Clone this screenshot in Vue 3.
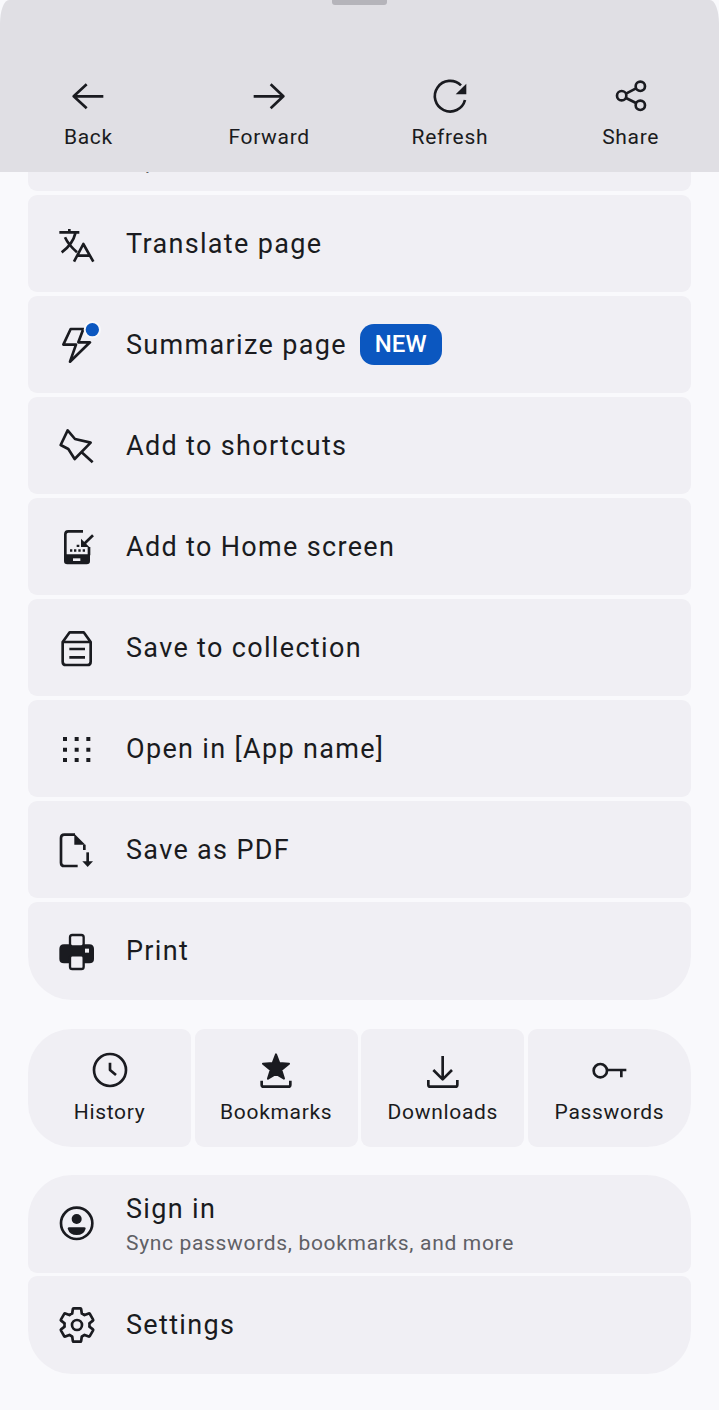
<template>
  <div class="page">
    <header class="toolbar">
      <div class="handle"></div>
      <nav class="nav">
        <div class="nav-item">
          <svg class="icon" viewBox="0 0 120 120"><path d="M106 61H17M56 25L17 61L56 97" /></svg>
          <span>Back</span>
        </div>
        <div class="nav-item">
          <svg class="icon" viewBox="0 0 120 120"><path d="M14 61H103M65 25L103 61L65 97" /></svg>
          <span>Forward</span>
        </div>
        <div class="nav-item">
          <svg class="icon" viewBox="0 0 120 120">
            <path d="M93 28A46 46 0 1 0 105 72" />
            <path class="fill" d="M109 23V55H77Z" />
          </svg>
          <span>Refresh</span>
        </div>
        <div class="nav-item">
          <svg class="icon" viewBox="0 0 120 120">
            <circle cx="88" cy="31" r="14" />
            <circle cx="32" cy="59" r="14" />
            <circle cx="88" cy="88" r="14" />
            <path d="M45 53L75 37M45 66L75 81" />
          </svg>
          <span>Share</span>
        </div>
      </nav>
    </header>

    <main class="content">
      <section class="list">
        <div class="row">
          <span class="icon-slot"></span>
          <div class="texts">
            <div class="title">Desktop</div>
            <div class="sub">Tips</div>
          </div>
        </div>
        <div class="row">
          <svg class="icon" viewBox="0 0 120 120">
            <path d="M7 25H67M37 15V25M14 85C35 70 50 50 56 25M24 40C32 58 45 72 60 85" />
            <path d="M51 113L79 60L109 113M60 95H100" />
          </svg>
          <div class="title">Translate page</div>
        </div>
        <div class="row">
          <svg class="icon" viewBox="0 0 120 120">
            <path d="M41 12L19 59H57L39 110L99 52H64L79 12Z" />
            <circle class="dot" cx="106" cy="14" r="23" />
          </svg>
          <div class="title">Summarize page</div>
          <span class="badge">NEW</span>
        </div>
        <div class="row">
          <svg class="icon" viewBox="0 0 120 120">
            <path d="M32 13L11 57L34 69L53 99L101 50L54 39ZM74 79L107 109" />
          </svg>
          <div class="title">Add to shortcuts</div>
        </div>
        <div class="row">
          <svg class="icon" viewBox="0 0 120 120">
            <path d="M78 13H34Q25 13 25 22V85M96 60V85" />
            <path class="fill" d="M21 82H99V102Q99 112 89 112H31Q21 112 21 102Z" />
            <rect class="hole" x="48" y="94" width="22" height="8" />
            <path class="fill" d="M59 53h8v7h-8zM39 67h7v7h-7zM51 67h7v7h-7zM64 67h7v7h-7zM77 67h7v7h-7z" />
            <path d="M108 25L78 54" />
            <path class="fill" d="M72 35V60H97Z" />
          </svg>
          <div class="title">Add to Home screen</div>
        </div>
        <div class="row">
          <svg class="icon" viewBox="0 0 120 120">
            <path d="M17 42L38 13H80L101 42V101Q101 111 91 111H27Q17 111 17 101ZM17 42H101M37 63H84M37 88H84" />
          </svg>
          <div class="title">Save to collection</div>
        </div>
        <div class="row">
          <svg class="icon" viewBox="0 0 120 120">
            <path class="fill" d="M18 24h12v12h-12zM53 24h12v12h-12zM88 24h12v12h-12zM18 56h12v12h-12zM53 56h12v12h-12zM88 56h12v12h-12zM18 87h12v12h-12zM53 87h12v12h-12zM88 87h12v12h-12z" />
          </svg>
          <div class="title">Open in [App name]</div>
        </div>
        <div class="row">
          <svg class="icon" viewBox="0 0 120 120">
            <path d="M54 14H22Q12 14 12 24V98Q12 108 22 108H62M82 44V60" />
            <path class="fill" d="M52 11L85 44H52Z" />
            <path d="M92 67V96" />
            <path class="fill" d="M76 94H108L92 111Z" />
          </svg>
          <div class="title">Save as PDF</div>
        </div>
        <div class="row last">
          <svg class="icon" viewBox="0 0 120 120">
            <path class="fill" d="M21 40H97Q111 40 111 54V84Q111 97 97 97H21Q7 97 7 84V54Q7 40 21 40Z" />
            <rect class="paper" x="39" y="12" width="41" height="34" rx="7" />
            <rect class="paper" x="39" y="73" width="41" height="41" rx="7" />
            <rect class="hole" x="84" y="53" width="12" height="12" />
          </svg>
          <div class="title">Print</div>
        </div>
      </section>

      <section class="tiles">
        <div class="tile">
          <svg class="icon" viewBox="0 0 120 120">
            <circle cx="60" cy="60" r="48" />
            <path d="M60 38V60L78 75" />
          </svg>
          <span>History</span>
        </div>
        <div class="tile">
          <svg class="icon" viewBox="0 0 120 120">
            <path class="star" d="M60 13L70 39L99 41L76 60L84 86L60 72L36 86L44 60L21 41L50 39Z" />
            <path d="M17 92V104Q17 110 23 110H97Q103 110 103 104V92" />
          </svg>
          <span>Bookmarks</span>
        </div>
        <div class="tile">
          <svg class="icon" viewBox="0 0 120 120">
            <path d="M59 18V88M31 60L59 88L87 60" />
            <path d="M16 90V104Q16 110 22 110H97Q103 110 103 104V90" />
          </svg>
          <span>Downloads</span>
        </div>
        <div class="tile">
          <svg class="icon" viewBox="0 0 120 120">
            <circle cx="34" cy="62" r="20" />
            <path d="M54 60H112M97 60V82" />
          </svg>
          <span>Passwords</span>
        </div>
      </section>

      <section class="list account">
        <div class="row">
          <svg class="icon" viewBox="0 0 120 120">
            <circle cx="59" cy="58" r="47" />
            <circle class="fill" cx="59" cy="45" r="15" />
            <path class="fill" d="M32 74Q32 70 37 70H81Q86 70 86 74Q80 93 59 93Q38 93 32 74Z" />
          </svg>
          <div class="texts">
            <div class="title">Sign in</div>
            <div class="sub">Sync passwords, bookmarks, and more</div>
          </div>
        </div>
        <div class="row last">
          <svg class="icon gear" viewBox="0 0 24 24">
            <path d="M19.43 12.98c.04-.32.07-.64.07-.98 0-.34-.03-.66-.07-.98l2.11-1.65c.19-.15.24-.42.12-.64l-2-3.46c-.09-.16-.26-.25-.44-.25-.06 0-.12.01-.17.03l-2.49 1c-.52-.4-1.08-.73-1.69-.98l-.38-2.65C14.46 2.18 14.25 2 14 2h-4c-.25 0-.46.18-.49.42l-.38 2.65c-.61.25-1.17.59-1.69.98l-2.49-1c-.06-.02-.12-.03-.18-.03-.17 0-.34.09-.43.25l-2 3.46c-.13.22-.07.49.12.64l2.11 1.65c-.04.32-.07.65-.07.98 0 .33.03.66.07.98l-2.11 1.65c-.19.15-.24.42-.12.64l2 3.46c.09.16.26.25.44.25.06 0 .12-.01.17-.03l2.49-1c.52.4 1.08.73 1.69.98l.38 2.65c.03.24.24.42.49.42h4c.25 0 .46-.18.49-.42l.38-2.65c.61-.25 1.17-.59 1.69-.98l2.49 1c.06.02.12.03.18.03.17 0 .34-.09.43-.25l2-3.46c.12-.22.07-.49-.12-.64l-2.11-1.65z" />
            <circle cx="12" cy="12" r="3" />
          </svg>
          <div class="title">Settings</div>
        </div>
      </section>
    </main>
  </div>
</template>

<script setup>
</script>

<style>
html,
body {
  margin: 0;
  background: #f9f9fc;
}
</style>

<style scoped>
.page {
  position: relative;
  width: 719px;
  height: 1410px;
  overflow: hidden;
  background: #f9f9fc;
  color: #1a1b20;
  font-family: Roboto, "Noto Sans", sans-serif;
}

/* bottom sheet header sits over the scrolled list */
.toolbar {
  position: absolute;
  top: 0;
  left: 0;
  right: 0;
  z-index: 2;
  height: 172px;
  background: #e0dfe4;
  border-top-left-radius: 9px 24px;
  border-top-right-radius: 9px 24px;
}

.handle {
  width: 55px;
  height: 5px;
  margin: 0 auto;
  background: #b5b4ba;
  border-radius: 0 0 3px 3px;
}

.nav {
  display: grid;
  grid-template-columns: repeat(4, 1fr);
  margin: 71px -2px 0;
}

.nav-item,
.tile {
  display: flex;
  flex-direction: column;
  align-items: center;
  font-size: 21px;
  letter-spacing: 0.68px;
  line-height: 28px;
}

.nav-item .icon {
  margin-bottom: 7px;
}

.icon {
  flex: none;
  width: 40px;
  height: 40px;
  overflow: visible;
  fill: none;
  stroke: #1a1b20;
  stroke-width: 8;
  stroke-linejoin: round;
}

.icon .fill {
  fill: #1a1b20;
  stroke: none;
}

.icon .star {
  fill: #1a1b20;
  stroke-width: 6;
}

.icon .hole {
  fill: #f0eff4;
  stroke: none;
}

.icon .paper {
  fill: #f0eff4;
  stroke-width: 7;
}

.icon .dot {
  fill: #0b57c0;
  stroke: #f8f8fb;
  stroke-width: 6;
}

.gear {
  stroke-width: 1.6;
}

.content {
  display: flex;
  flex-direction: column;
  padding: 94px 28px 0;
}

.list {
  display: flex;
  flex-direction: column;
  gap: 4px;
}

.row {
  display: flex;
  align-items: center;
  height: 97px;
  padding-left: 29px;
  background: #f0eff4;
  border-radius: 9px;
}

.row.last {
  height: 98px;
  border-radius: 9px 9px 44px 44px;
}

.icon-slot {
  flex: none;
  width: 40px;
}

.title {
  margin-left: 29px;
  font-size: 27px;
  letter-spacing: 1.33px;
  line-height: 34px;
}

.texts {
  padding-top: 4px;
}

.sub {
  margin-left: 29px;
  color: #5f6066;
  font-size: 21px;
  letter-spacing: 0.67px;
  line-height: 34px;
}

.badge {
  margin-left: 13px;
  padding: 0 15px;
  height: 41px;
  line-height: 41px;
  color: #fff;
  background: #0b57c0;
  border-radius: 14px;
  font-size: 24px;
  font-weight: 500;
}

.tiles {
  display: grid;
  grid-template-columns: repeat(4, 1fr);
  gap: 3.5px;
  margin-top: 29px;
}

.tile {
  height: 118px;
  padding-top: 21px;
  box-sizing: border-box;
  background: #f0eff4;
  border-radius: 9px;
}

.tile span {
  margin-top: 8px;
}

.tile:first-child {
  border-radius: 44px 9px 9px 44px;
}

.tile:last-child {
  border-radius: 9px 44px 44px 9px;
}

.account {
  gap: 3px;
  margin-top: 28px;
}

.account .row {
  height: 98px;
  border-radius: 44px 44px 9px 9px;
}

.account .row.last {
  border-radius: 9px 9px 44px 44px;
}
</style>
